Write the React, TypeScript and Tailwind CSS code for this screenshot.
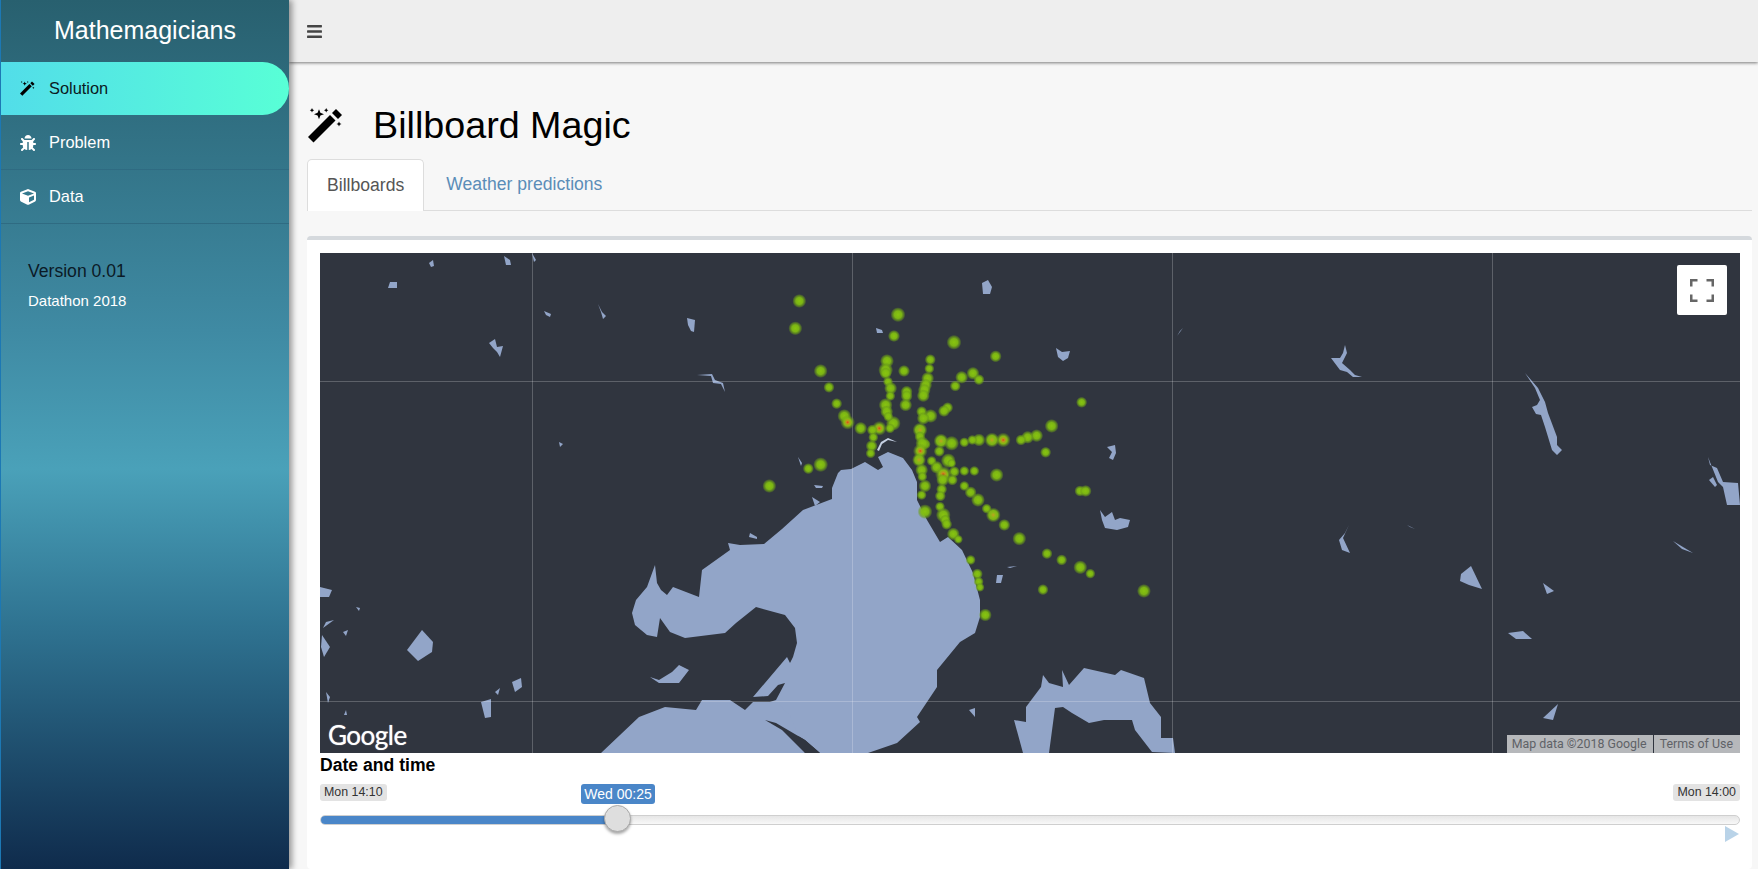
import React from "react";
import { FaBug, FaCube, FaBars } from "react-icons/fa";

const water: string[] = [
  // main bay
  "740,545 764,544 782,529 803,510 832,499 832,488 838,473 841,470 851,469 865,462 878,470 883,467 878,457 888,452 903,458 912,470 917,482 917,500 927,520 940,542 948,537 962,550 973,573 980,600 980,617 975,633 960,642 937,670 937,687 917,717 920,722 897,743 868,753 820,753 805,740 776,723 765,720 760,705 776,700 785,683 778,685 768,696 753,697 787,657 790,663 793,657 797,643 795,628 785,615 756,607 736,623 725,633 685,638 670,632 660,618 657,637 647,635 635,625 632,613 636,600 647,587 655,565 657,583 661,590 667,595 673,587 699,597 702,570 730,550 728,543 740,545",
  // lower-left mass
  "601,753 620,735 639,717 665,707 696,710 702,700 730,700 745,710 753,702 776,702 790,715 805,753",
  // western port
  "1023,753 1014,720 1026,722 1026,707 1041,687 1043,675 1049,683 1063,687 1062,670 1069,685 1084,668 1115,675 1121,670 1144,678 1150,703 1161,717 1161,738 1173,738 1175,753 1152,752 1135,730 1132,720 1104,720 1089,723 1072,713 1063,707 1055,708 1049,753",
  "388,288 390,282 397,282 397,288",
  "429,263 433,260 434,266 431,267",
  "504,256 510,260 511,265 506,265",
  "532,253 536,260 534,262",
  "544,311 551,314 550,317 546,315",
  "598,304 602,312 606,316 603,319 601,312",
  "687,318 695,320 694,332 691,331 688,325",
  "489,343 495,339 497,347 503,346 500,357 497,352 493,348",
  "697,375 712,374 715,380 723,383 725,392 721,384 713,383 711,376",
  "559,442 563,444 560,447",
  "982,283 988,280 992,287 990,294 983,294",
  "876,328 882,330 883,333 877,333",
  "1056,348 1062,352 1070,351 1068,358 1063,361 1058,357",
  "1107,447 1115,445 1116,453 1113,460 1109,458 1112,452",
  "1100,510 1105,517 1112,512 1115,520 1120,518 1130,520 1128,527 1117,530 1105,528 1102,520",
  "997,575 1003,575 1001,583 996,583",
  "1007,567 1017,566 1010,568",
  "814,485 823,486 822,488 816,488",
  "812,497 820,502 815,506",
  "750,533 757,537 757,539 749,537",
  "798,457 802,463 801,466",
  "1345,345 1347,353 1342,363 1350,370 1355,375 1362,377 1353,377 1347,372 1340,370 1331,358 1340,358 1343,353",
  "1525,373 1538,388 1545,402 1548,413 1557,437 1557,445 1562,450 1557,455 1552,450 1545,427 1541,415 1536,414 1532,407 1537,405 1540,400 1535,388",
  "1708,457 1710,465 1717,468 1723,482 1738,483 1740,505 1727,505 1723,487 1718,482 1712,467",
  "1709,480 1713,477 1717,485 1715,487",
  "1183,328 1177,336 1180,331",
  "1349,525 1343,538 1350,553 1342,550 1339,540 1345,533",
  "1407,525 1415,529 1410,527",
  "1461,574 1471,566 1482,589 1469,585 1460,581",
  "1543,583 1554,591 1547,594",
  "1508,633 1523,631 1532,639 1516,639",
  "1543,718 1558,704 1553,720",
  "1673,541 1693,553 1682,549",
  "407,650 422,630 433,642 432,652 418,661",
  "320,587 332,590 329,597 320,597",
  "356,607 360,608 359,611",
  "326,622 334,620 323,628",
  "322,635 330,647 324,657 321,647",
  "343,632 348,630 346,636",
  "326,692 330,697 328,703",
  "346,710 347,715 344,715",
  "481,702 491,699 491,717 485,718",
  "495,692 500,688 498,695",
  "512,682 521,678 522,687 515,692",
  "650,677 659,680 672,672 679,665 689,670 679,683 659,683",
  "969,710 975,708 975,717",
];

const wedge = "765,720 776,723 805,740 820,753 805,753 782,730";

type Dot = [number, number, number, number?];
const dots: Dot[] = [
  [178,63,15],[166,145,15],[474,104,16],[462,168,13],[642,187,16],[767,229,13],[441,243,15],[571,239,12],[568,266,11],[437,270,16],[437,280,13],[492,273,13],[242,273,15],[563,295,14],[665,292,14],[699,280,14],[717,299,12],[444,305,11],[557,315,14],[646,318,12],[452,325,14],[553,330,14],[451,348,11],[550,347,14],[500,335,13],[500,348,13],[267,322,12],[497,375,14],[290,371,12],[1025,367,12],[437,375,15],[440,395,14],[623,383,12],[612,393,13],[313,408,15],[323,427,16,2],[545,395,12],[572,408,15],[550,415,14],[460,430,16],[445,410,11],[540,450,16,1],[935,438,15],[362,445,14],[418,445,16,2],[397,450,12],[450,445,11],[400,472,11],[540,470,12],[890,467,14],[863,472,14],[843,480,12],[790,480,16,2],[756,480,16,1],[717,480,14],[697,480,11],[673,487,11],[603,483,16,1],[635,490,16],[557,493,11],[547,490,15],[395,498,13],[392,520,11],[598,514,12],[917,517,12],[541,513,16,2],[537,540,15,1],[575,543,11],[590,562,14],[625,542,16],[635,550,10],[545,570,14],[643,575,12],[673,573,11],[703,573,11],[770,585,15],[610,583,18,2],[547,590,11],[637,600,12],[608,600,14],[555,618,14],[673,618,11],[605,628,12],[692,637,13],[601,648,12],[545,645,11],[1020,633,12],[1037,633,13],[714,660,15],[600,680,11],[740,686,11],[555,695,16],[610,705,16],[616,720,12],[760,705,16,1],[793,735,13],[620,733,12],[640,762,14],[655,778,10],[838,776,15],[921,821,12],[965,840,12],[1021,862,15],[1051,881,11],[692,840,11],[712,882,12],[716,905,11],[720,922,10],[909,929,12],[736,1005,14],[205,566,12],[242,554,16],[88,618,15],[1212,933,15],
];

function Wand({ size, className }: { size: number; className?: string }) {
  return (
    <svg viewBox="0 0 35 35" width={size} height={size} className={className} fill="currentColor">
      <path d="M0 29 22 7 27.5 12.5 5.5 34.5Z" />
      <path d="M24 5 28 1 34 7 30 11Z" />
      <path d="M11 1.2 12.4 4.8 16 6.2 12.4 7.6 11 11.2 9.6 7.6 6 6.2 9.6 4.8Z" />
      <path d="M4 0 4.7 1.5 6.2 2.2 4.7 2.9 4 4.4 3.3 2.9 1.8 2.2 3.3 1.5Z" />
      <path d="M18.2 0 18.9 1.5 20.4 2.2 18.9 2.9 18.2 4.4 17.5 2.9 16 2.2 17.5 1.5Z" />
      <path d="M31 13.5 31.8 15.2 33.5 16 31.8 16.8 31 18.5 30.2 16.8 28.5 16 30.2 15.2Z" />
    </svg>
  );
}

function MapArt() {
  return (
    <svg viewBox="320 253 1420 500" width="1420" height="500" className="block">
      <defs>
        <radialGradient id="g0">
          <stop offset="0%" stopColor="#88c40f" />
          <stop offset="50%" stopColor="#7fbb12" stopOpacity="0.95" />
          <stop offset="78%" stopColor="#6ca016" stopOpacity="0.6" />
          <stop offset="100%" stopColor="#6ca016" stopOpacity="0" />
        </radialGradient>
        <radialGradient id="g1">
          <stop offset="0%" stopColor="#c0a01e" />
          <stop offset="30%" stopColor="#8eb818" />
          <stop offset="60%" stopColor="#7fbb12" stopOpacity="0.95" />
          <stop offset="100%" stopColor="#6ca016" stopOpacity="0" />
        </radialGradient>
        <radialGradient id="g2">
          <stop offset="0%" stopColor="#e04418" />
          <stop offset="20%" stopColor="#c0941e" />
          <stop offset="50%" stopColor="#84bb12" />
          <stop offset="100%" stopColor="#6ca016" stopOpacity="0" />
        </radialGradient>
      </defs>
      <rect x="320" y="253" width="1420" height="500" fill="#30353f" />
      {water.map((p, i) => (
        <polygon key={i} points={p} fill="#92a5c8" />
      ))}
      <polygon points={wedge} fill="#30353f" />
      <polygon points="877,450 881,442 888,438 897,442 888,440 882,444 879,451" fill="#c5d0e2" />
      <g stroke="#ffffff" strokeOpacity="0.22" strokeWidth="1">
        <line x1="532.5" y1="253" x2="532.5" y2="753" />
        <line x1="852.5" y1="253" x2="852.5" y2="753" />
        <line x1="1172.5" y1="253" x2="1172.5" y2="753" />
        <line x1="1492.5" y1="253" x2="1492.5" y2="753" />
        <line x1="320" y1="381.5" x2="1740" y2="381.5" />
        <line x1="320" y1="701.5" x2="1740" y2="701.5" />
      </g>
      <g transform="translate(740 280) scale(0.3333)">
        {dots.map(([x, y, r, h], i) => (
          <circle key={i} cx={x} cy={y} r={r * 1.4} fill={h === 2 ? "url(#g2)" : h === 1 ? "url(#g1)" : "url(#g0)"} />
        ))}
      </g>
    </svg>
  );
}

function NavItem({ icon, label, active }: { icon: React.ReactNode; label: string; active?: boolean }) {
  return active ? (
    <div className="h-[53px] mb-px pb-px flex items-center pl-[19px] rounded-r-full bg-[linear-gradient(90deg,#52dde9,#58ffd6)] text-[#0b1a22]">
      <span className="w-[29px] flex justify-start text-black">{icon}</span>
      <span className="text-[16.4px]">{label}</span>
    </div>
  ) : (
    <div className="h-[54px] flex items-center pl-[19px] border-b border-[#2f6b82] text-white">
      <span className="w-[29px] flex justify-start text-[16px]">{icon}</span>
      <span className="text-[16.4px]">{label}</span>
    </div>
  );
}

export default function App() {
  return (
    <div className="flex w-[1758px] h-[869px] overflow-hidden bg-[#f7f7f7] font-['Liberation_Sans',Arial,sans-serif]">
      <aside className="relative z-10 w-[289px] shrink-0 h-full border-l border-[#1c78b4] bg-[linear-gradient(180deg,#28606f_0%,#3f8aa3_38%,#4aa1b9_54%,#2f7391_72%,#0f2b4c_100%)] shadow-[3px_0_6px_rgba(0,0,0,0.4)]">
        <div className="h-[62px] flex items-center justify-center text-white text-[25px]">Mathemagicians</div>
        <NavItem active icon={<Wand size={15} />} label="Solution" />
        <NavItem icon={<FaBug />} label="Problem" />
        <NavItem icon={<FaCube />} label="Data" />
        <div className="pl-[27px] pt-[36px]">
          <div className="text-[17.6px] leading-[22px] text-[#0b1a26]">Version 0.01</div>
          <div className="text-[15px] leading-[20px] mt-[9px] text-white">Datathon 2018</div>
        </div>
      </aside>
      <main className="flex-1 min-w-0 flex flex-col">
        <header className="h-[62px] shrink-0 bg-[#eeeeee] flex items-center pl-[17px] text-[#444444] text-[17px] shadow-[0_1px_3px_rgba(0,0,0,0.5)]">
          <FaBars />
        </header>
        <div className="flex-1 flex flex-col pl-[18px] pr-[6px]">
          <div className="flex items-center h-[50px] mt-[39px]">
            <Wand size={35} className="ml-px -mt-[2px] text-black" />
            <h1 className="ml-[30px] text-[37.7px] text-black leading-none">Billboard Magic</h1>
          </div>
          <div className="flex items-end h-[52px] mt-[8px] border-b border-[#dddddd] text-[17.6px]">
            <div className="h-[52px] -mb-px px-[19px] flex items-center bg-white border border-b-0 border-[#dddddd] rounded-t-[5px] text-[#555555]">Billboards</div>
            <div className="h-[52px] ml-[2px] px-[20px] pt-px flex items-center text-[#5b8db8]">Weather predictions</div>
          </div>
          <section className="flex-1 mt-[25px] border-t-[4px] border-[#d5d9dd] rounded-[4px] bg-white px-[13px] pt-[13px] pr-[12px]">
            <div className="relative w-[1420px] h-[500px] overflow-hidden">
              <MapArt />
              <div className="absolute left-[8px] bottom-[1px] text-white text-[26px] leading-[34px] tracking-[-0.5px] font-['Lato',sans-serif] [text-shadow:0_0_1px_rgba(255,255,255,0.8)]">Google</div>
              <div className="absolute right-[13px] top-[12px] w-[50px] h-[50px] bg-white rounded-[2px] flex items-center justify-center">
                <svg width="24" height="23" viewBox="0 0 24 23" fill="#666666">
                  <path d="M0 0h7.5v2.5H2.5v5H0zM16.5 0H24v7.5h-2.5v-5h-5zM0 15.5h2.5v5h5V23H0zM21.5 15.5H24V23h-7.5v-2.5h5z" />
                </svg>
              </div>
              <div className="absolute right-0 bottom-0 h-[18px] flex items-center bg-[#b6b8bb] text-[#5f6267] text-[12.4px] font-['Roboto',sans-serif]">
                <span className="pl-[5px] pr-[6px] border-r border-[#30353f] h-full leading-[18px]">Map data ©2018 Google</span>
                <span className="pl-[6px] pr-[7px] leading-[18px]">Terms of Use</span>
              </div>
            </div>
            <div className="text-[17.6px] font-bold text-black leading-[24px]">Date and time</div>
            <div className="relative w-[1420px] h-[70px] mt-[7px]">
              <div className="flex justify-between">
                <span className="h-[17px] px-[4px] leading-[17px] text-[12.4px] rounded-[3px] bg-[#e3e3e3] text-[#333333]">Mon 14:10</span>
                <span className="h-[17px] px-[4px] leading-[17px] text-[12.4px] rounded-[3px] bg-[#e3e3e3] text-[#333333]">Mon 14:00</span>
              </div>
              <span className="absolute left-[261px] top-0 h-[20px] w-[74px] text-center leading-[20px] text-[14px] rounded-[3px] bg-[#4a86c8] text-white">Wed 00:25</span>
              <div className="mt-[14px] h-[10px] rounded-full border border-[#cfcfcf] bg-[linear-gradient(180deg,#e6e6e6,#f8f8f8)] overflow-hidden">
                <div className="h-full w-[297px] bg-[#4a86c8]" />
              </div>
              <div className="absolute left-[284px] top-[21px] w-[27px] h-[27px] rounded-full bg-[#dedede] border border-[#aaaaaa] shadow-[0_2px_3px_rgba(0,0,0,0.35)]" />
              <svg className="absolute right-[1px] top-[42px]" width="14" height="16" viewBox="0 0 14 16" fill="#b9d3e8">
                <path d="M0 0l14 8L0 16z" />
              </svg>
            </div>
          </section>
        </div>
      </main>
    </div>
  );
}
